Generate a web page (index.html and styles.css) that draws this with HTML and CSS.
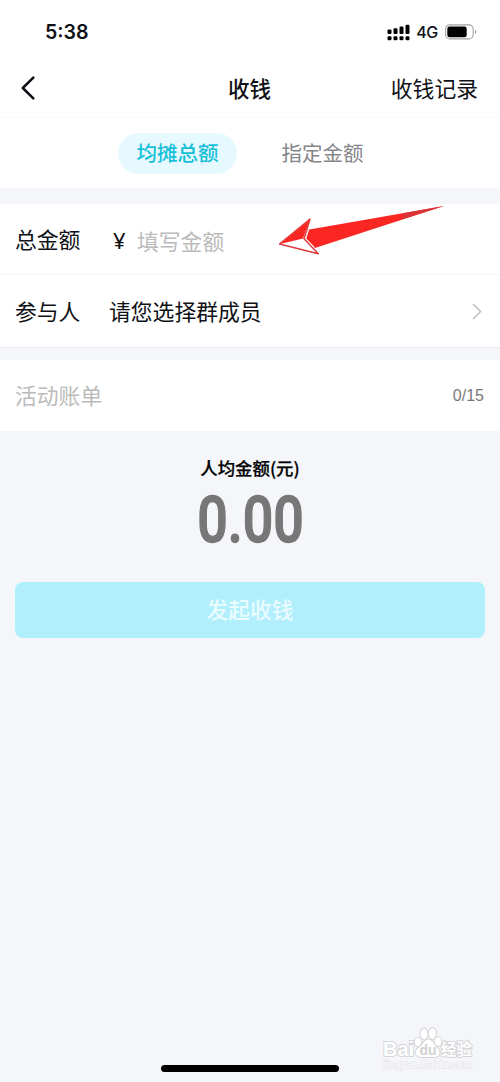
FILE: index.html
```html
<!DOCTYPE html>
<html lang="zh-CN">
<head>
<meta charset="utf-8">
<title>收钱</title>
<link rel="stylesheet" href="styles.css">
</head>
<body>
<div class="screen">
  <header class="top">
    <div class="status">
      <span class="time">5:38</span>
      <div class="indicators">
        <svg class="signal" width="24" height="17" viewBox="0 0 24 17">
          <rect x="0.5" y="5.5" width="4" height="4.5" rx="1.1"/><rect x="6.5" y="4.3" width="4" height="5.7" rx="1.1"/><rect x="12.5" y="2.6" width="4" height="7.4" rx="1.1"/><rect x="18.5" y="0.8" width="4" height="9.2" rx="1.1"/>
          <rect x="0.5" y="12.2" width="4" height="4" rx="1.2"/><rect x="6.5" y="12.2" width="4" height="4" rx="1.2"/><rect x="12.5" y="12.2" width="4" height="4" rx="1.2"/><rect x="18.5" y="12.2" width="4" height="4" rx="1.2"/>
        </svg>
        <span class="network">4G</span>
        <svg class="battery" width="32" height="16" viewBox="0 0 32 16">
          <rect x="0.6" y="0.9" width="27.6" height="14" rx="4.2" fill="none" stroke="#a2a2a2" stroke-width="1.1"/>
          <rect x="2.3" y="2.6" width="19.4" height="10.6" rx="2.3"/>
          <path d="M30 5.8Q32.6 7.9 30 10Z" fill="#999"/>
        </svg>
      </div>
    </div>
    <nav class="nav">
      <svg class="back" width="14" height="24" viewBox="0 0 14 24"><path d="M12.3 1.7L1.8 12L12.3 22.3" fill="none" stroke="#0c0d12" stroke-width="2.5" stroke-linecap="round" stroke-linejoin="round"/></svg>
      <h1 class="title">收钱</h1>
      <span class="history">收钱记录</span>
    </nav>
  </header>
  <div class="tabs">
    <span class="tab active">均摊总额</span>
    <span class="tab">指定金额</span>
  </div>
  <section class="group details">
    <div class="row total">
      <span class="label">总金额</span>
      <span class="yen">¥</span>
      <span class="placeholder">填写金额</span>
    </div>
    <div class="row members">
      <span class="label">参与人</span>
      <span class="value">请您选择群成员</span>
      <svg class="chevron" width="10" height="17" viewBox="0 0 10 17"><path d="M1 1L8.6 8.5L1 16" fill="none" stroke="#bcbcbf" stroke-width="1.4"/></svg>
    </div>
    <svg class="arrow" width="168" height="56" viewBox="0 0 168 56">
      <path d="M167 4L31 27.7L28.6 36.3L35 42.9L38 46Z" fill="#fa2622"/>
      <path d="M126 11.2L167 4L126 17Z" fill="#d93438"/>
      <path d="M2.5 42L33 17L27 36.7L41.3 51.7Z" fill="#fff" stroke="#dd3c3e" stroke-width="1.5" stroke-linejoin="round"/>
      <path d="M3 42L32.4 18L26 36.6Z" fill="#fa2622"/>
      <path d="M31.5 28L28.8 36.5L37.5 45.4" fill="none" stroke="#fff" stroke-width="1"/>
    </svg>
  </section>
  <section class="group row bill">
    <span class="placeholder">活动账单</span>
    <span class="counter">0/15</span>
  </section>
  <section class="summary">
    <div class="caption">人均金额(元)</div>
    <div class="amount">0.00</div>
    <button class="submit">发起收钱</button>
  </section>
  <footer class="home"><span class="home-bar"></span></footer>
  <svg class="watermark" width="100" height="50" viewBox="0 0 100 50">
    <g class="wm-shape">
      <text x="2" y="31.5" class="wm-brand" textLength="31" lengthAdjust="spacingAndGlyphs">Bai</text>
      <ellipse cx="37" cy="18" rx="3.2" ry="4.3"/><ellipse cx="43" cy="10" rx="3.6" ry="5.4"/><ellipse cx="51.5" cy="9.5" rx="3.6" ry="5.4"/><ellipse cx="57" cy="17.5" rx="3.4" ry="4.3"/>
      <path d="M40 22Q47 10 53 20L58 26Q60 33 54 33H39Q32 31 36 25Z"/>
    </g>
    <text x="38.5" y="31" class="wm-du" textLength="17" lengthAdjust="spacingAndGlyphs">du</text>
    <text x="60" y="31" class="wm-cn">经验</text>
    <text x="3" y="44" class="wm-url" textLength="88" lengthAdjust="spacingAndGlyphs">jingyan.baidu.com</text>
  </svg>
</div>
</body>
</html>
```
FILE: styles.css
```css
* { box-sizing: border-box; }
body {
  margin: 0;
  font-family: "Noto Sans CJK SC", sans-serif;
  color: #101116;
}
.screen {
  position: relative;
  display: flex;
  flex-direction: column;
  width: 500px;
  height: 1082px;
  overflow: hidden;
  background: #f5f6fa;
}
.top { height: 118px; background: #fff; border-bottom: 1px solid #fafafa; }
.status {
  display: flex;
  justify-content: space-between;
  align-items: center;
  height: 59px;
  padding: 5px 23px 0 45px;
}
.time { font: 600 19.6px/24px Inter, sans-serif; letter-spacing: 0; }
.indicators { display: flex; align-items: center; }
.network { margin: 0 7px 0 5px; font: 500 16px/20px Inter, sans-serif; letter-spacing: -0.3px; }
.nav {
  display: grid;
  grid-template-columns: 1fr auto 1fr;
  align-items: center;
  height: 58px;
  padding: 0 22px 0 21px;
}
.title { margin: 0; font-size: 21.5px; font-weight: 500; line-height: 32px; }
.history { justify-self: end; font-size: 21.8px; line-height: 32px; }
.title, .history { padding-bottom: 1px; }
.tabs {
  display: flex;
  align-items: center;
  gap: 26px;
  height: 70px;
  padding-left: 118px;
  background: #fff;
}
.tab {
  width: 119px;
  height: 41px;
  border-radius: 21px;
  font-size: 20.5px;
  line-height: 39px;
  text-align: center;
  color: #85868a;
}
.tab.active { font-weight: 500; color: #18bfd9; background: #e6f9fe; }
.group { background: #fff; }
.details { position: relative; margin-top: 16px; }
.row {
  display: flex;
  align-items: center;
  height: 71px;
  padding: 0 16px 0 15px;
  font-size: 21.8px;
  line-height: 32px;
}
.total { box-shadow: inset 0 -1px #f5f5f6; }
.members { height: 73px; border-bottom: 1px solid #ececef; }
.label { width: 94px; padding-bottom: 1px; }
.value { padding-bottom: 1px; }
.yen { width: 28px; padding: 1px 0 0 4px; font: 22px/32px "Noto Sans", sans-serif; }
.placeholder { color: #bbb; }
.total .placeholder { padding-top: 3px; }
.chevron { margin-left: auto; margin-right: 2px; }
.arrow { position: absolute; left: 277px; top: -2px; }
.bill { margin-top: 12px; justify-content: space-between; }
.bill .placeholder { padding-bottom: 1px; }
.counter { font: 16px/20px "Liberation Sans", sans-serif; color: #777; }
.summary { display: flex; flex-direction: column; align-items: center; padding: 24px 15px 0; }
.caption { font-size: 17.4px; font-weight: 500; line-height: 26px; color: #000; -webkit-text-stroke: .25px #000; }
.amount {
  margin-top: 6px;
  font: 500 64px/68px Roboto, sans-serif;
  color: #777;
  transform: scaleX(.84);
  -webkit-text-stroke: 1.4px #777;
}
.submit {
  width: 470px;
  height: 56px;
  margin-top: 27px;
  padding: 0 0 2px;
  border: 0;
  border-radius: 8px;
  background: #b1effd;
  color: #eafcff;
  font: 500 21.7px/54px "Noto Sans CJK SC", sans-serif;
}
.home { display: flex; justify-content: center; margin-top: auto; padding-bottom: 10px; }
.home-bar { width: 178px; height: 7px; border-radius: 4px; background: #000; }
.watermark { position: absolute; left: 381px; top: 1024px; }
.wm-shape, .wm-cn { fill: #fff; stroke: #d3d4d7; stroke-width: 2px; paint-order: stroke; }
.wm-brand { font: 700 21px "Liberation Sans", sans-serif; }
.wm-du { font: 700 15px "Liberation Sans", sans-serif; fill: #d0d1d4; }
.wm-cn { font: 700 15.5px "Noto Sans CJK SC", sans-serif; }
.wm-url { font: 10px "Liberation Sans", sans-serif; fill: #fff; stroke: #e2e3e6; stroke-width: 1.2px; paint-order: stroke; }
```
